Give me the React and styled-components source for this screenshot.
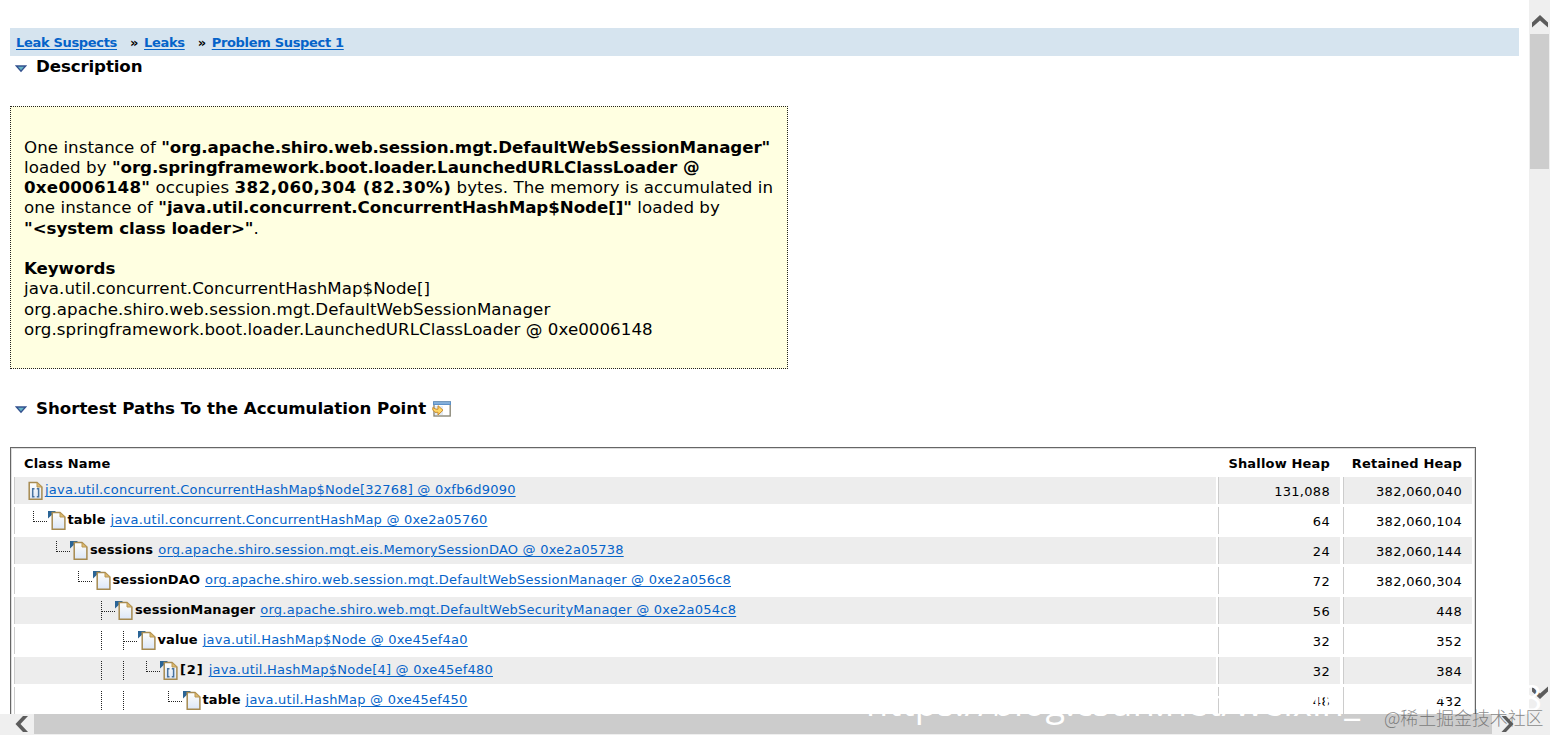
import React from 'react';
import styled, { createGlobalStyle } from 'styled-components';

const GlobalStyle = createGlobalStyle`
    html, body {
        margin : 0;
        background : #fff;
        overflow : hidden;
    }
    * {
        box-sizing : border-box;
    }
`;

const rows = [
    {tree: [], array: true, first: true, link: 'java.util.concurrent.ConcurrentHashMap$Node[32768] @ 0xfb6d9090', shallow: '131,088', retained: '382,060,040'},
    {tree: ['end'], name: 'table', link: 'java.util.concurrent.ConcurrentHashMap @ 0xe2a05760', shallow: '64', retained: '382,060,104'},
    {tree: ['', 'end'], name: 'sessions', link: 'org.apache.shiro.session.mgt.eis.MemorySessionDAO @ 0xe2a05738', shallow: '24', retained: '382,060,144'},
    {tree: ['', '', 'end'], name: 'sessionDAO', link: 'org.apache.shiro.web.session.mgt.DefaultWebSessionManager @ 0xe2a056c8', shallow: '72', retained: '382,060,304'},
    {tree: ['', '', '', 'fork'], name: 'sessionManager', link: 'org.apache.shiro.web.mgt.DefaultWebSecurityManager @ 0xe2a054c8', shallow: '56', retained: '448'},
    {tree: ['', '', '', 'line', 'fork'], name: 'value', link: 'java.util.HashMap$Node @ 0xe45ef4a0', shallow: '32', retained: '352'},
    {tree: ['', '', '', 'line', 'line', 'end'], name: '[2]', array: true, link: 'java.util.HashMap$Node[4] @ 0xe45ef480', shallow: '32', retained: '384'},
    {tree: ['', '', '', 'line', 'line', '', 'end'], name: 'table', link: 'java.util.HashMap @ 0xe45ef450', shallow: '48', retained: '432'},
];

const Branch = ({type}) => (
    <BranchSvg viewBox="0 0 22.5 20">
        {type === 'end' && <path d="M7.5 1V12M8 11.5H22" />}
        {type === 'fork' && <path d="M7.5 1V20M8 11.5H22" />}
        {type === 'line' && <path d="M7.5 1V20" />}
    </BranchSvg>
);

const ObjectIcon = ({array, first}) => (
    <IconSvg viewBox="0 0 19 20">
        <defs>
            <linearGradient id="paper" x1="0" y1="0" x2="0" y2="1">
                <stop offset="0" stopColor="#fffefa" />
                <stop offset="1" stopColor="#dce7f8" />
            </linearGradient>
        </defs>
        {!first && <path d="M0 0H8L0 7.5Z" fill="#2a6496" />}
        <path d="M4.2 1.5H12L16.9 6V18.2H4.2Z" fill="url(#paper)" stroke="#a68a50" strokeWidth="1.5" />
        <path d="M12 1.5V6H16.9Z" fill="#e0bd70" stroke="#b89653" />
        {array && <path d="M9.5 7.7H7.7V15.8H9.5M11.8 7.7H13.6V15.8H11.8" fill="none" stroke="#47729f" strokeWidth="1.5" />}
    </IconSvg>
);

const Toggle = () => (
    <ToggleSvg viewBox="0 0 12 8">
        <path d="M1.3 1H10.7L6 6.2Z" fill="#65b5c5" stroke="#34518f" strokeWidth="1.4" />
    </ToggleSvg>
);

const OpenIcon = () => (
    <OpenSvg viewBox="0 0 19 16">
        <rect x="2" y="1" width="16.2" height="14" fill="#fff" stroke="#8b8979" strokeWidth="1.4" />
        <path d="M1 .3H19V4H1Z" fill="#5d91c8" />
        <path d="M2 2H18" stroke="#a8caea" />
        <path d="M3 5H11V14H3Z" fill="#e2ebf5" />
        <path d="M.8 6.5L4 8.2H6V4.7L11 9.2L6 14V11.3H3L.8 9Z" fill="#ffd765" stroke="#c98b2c" />
    </OpenSvg>
);

function App() {
    return (
        <Screen>
            <GlobalStyle />
            <Upper>
                <Content>
                    <Crumbs>
                        <a>Leak Suspects</a><span>»</span>
                        <a>Leaks</a><span>»</span>
                        <a>Problem Suspect 1</a>
                    </Crumbs>
                    <Heading><Toggle /><h2>Description</h2></Heading>
                    <Description>
                        <p>One instance of <b>"org.apache.shiro.web.session.mgt.DefaultWebSessionManager"</b></p>
                        <p>loaded by <b>"org.springframework.boot.loader.LaunchedURLClassLoader @</b></p>
                        <p><Figure>0xe0006148"</Figure> occupies <Figure $wide>382,060,304 (82.30%)</Figure> bytes. The memory is accumulated in</p>
                        <p>one instance of <b>"java.util.concurrent.ConcurrentHashMap$Node[]"</b> loaded by</p>
                        <p><b>"&lt;system class loader&gt;"</b>.</p>
                        <br />
                        <p><b>Keywords</b></p>
                        <p>java.util.concurrent.ConcurrentHashMap$Node[]</p>
                        <p>org.apache.shiro.web.session.mgt.DefaultWebSessionManager</p>
                        <p>org.springframework.boot.loader.LaunchedURLClassLoader @ 0xe0006148</p>
                    </Description>
                    <Heading $second><Toggle /><h2>Shortest Paths To the Accumulation Point</h2><OpenIcon /></Heading>
                    <Table>
                        <HeaderRow>
                            <span>Class Name</span><span>Shallow Heap</span><span>Retained Heap</span>
                        </HeaderRow>
                        {rows.map((row, i) => (
                            <Row key={row.link} $odd={i % 2 === 0}>
                                <ClassCell $array={row.array}>
                                    {row.tree.map((type, n) => <Branch key={n} type={type} />)}
                                    <ObjectIcon array={row.array} first={row.first} />
                                    {row.name && <b>{row.name}</b>}
                                    <a>{row.link}</a>
                                </ClassCell>
                                <NumberCell>{row.shallow}</NumberCell>
                                <NumberCell $last>{row.retained}</NumberCell>
                            </Row>
                        ))}
                    </Table>
                </Content>
                <VerticalBar>
                    <Arrow viewBox="0 0 20 20"><path d="M10 3L18 10.5V15.5L10 8.5L2 15.5V10.5Z" /></Arrow>
                    <VerticalThumb />
                    <Arrow viewBox="0 0 20 20"><path d="M10 15L18 7.5V2.5L10 9.5L2 2.5V7.5Z" /></Arrow>
                </VerticalBar>
            </Upper>
            <HorizontalBar>
                <Arrow viewBox="0 0 20 20"><path d="M3.5 10L11 18H16L8.5 10L16 2H11Z" /></Arrow>
                <HorizontalThumb />
                <Arrow viewBox="0 0 20 20"><path d="M15.5 10L8 18H3.5L11 10L3.5 2H8Z" /></Arrow>
            </HorizontalBar>
            <BlogMark>https://blog.csdn.net/weixin_<span>43831578</span></BlogMark>
            <CommunityMark>@稀土掘金技术社区</CommunityMark>
        </Screen>
    );
}

export default App;

const Screen = styled.div`
    position : relative;
    width : 1550px;
    height : 735px;
    overflow : hidden;
    color : #000;
    font-family : "DejaVu Sans", sans-serif;
    a {
        color : #0563c9;
        text-decoration : underline;
        text-underline-offset : 2px;
        text-decoration-thickness : 1px;
    }
`;

const Upper = styled.div`
    display : flex;
    height : 714px;
`;

const Content = styled.main`
    width : 1529px;
    padding : 28px 10px 0;
    overflow : hidden;
`;

const Crumbs = styled.nav`
    display : flex;
    height : 28px;
    padding-left : 6px;
    background : #d6e4ef;
    font-size : 13px;
    font-weight : bold;
    line-height : 29px;
    letter-spacing : -.32px;
    white-space : pre;
    span {
        width : 27px;
        padding-left : 13px;
    }
`;

const Heading = styled.div`
    display : flex;
    height : 22px;
    margin-top : ${props => props.$second ? '28px' : '0'};
    padding-left : 5px;
    align-items : center;
    h2 {
        margin : ${props => props.$second ? '1px' : '0'} 6px 0 9px;
        font-size : 16.67px;
        line-height : 20px;
        letter-spacing : ${props => props.$second ? '-.02px' : '-.12px'};
        white-space : nowrap;
    }
`;

const ToggleSvg = styled.svg`
    width : 12px;
    height : 8px;
    margin-top : 3px;
`;

const OpenSvg = styled.svg`
    width : 19px;
    height : 16px;
    margin-top : 2px;
`;

const Description = styled.section`
    width : 778px;
    height : 263px;
    margin-top : 28px;
    padding : 30.6px 13px 0;
    border : 1px dotted #222;
    background : #ffffe1;
    font-size : 16.67px;
    line-height : 20.25px;
    letter-spacing : .05px;
    white-space : nowrap;
    p {
        margin : 0;
    }
    b {
        letter-spacing : -.05px;
    }
`;

const Figure = styled.strong`
    letter-spacing : ${props => props.$wide ? '.47px' : '.25px'};
`;

const Table = styled.section`
    width : 1466px;
    margin-top : 28px;
    padding : 2px 2px 0 3px;
    border : 1px solid #666;
    box-shadow : inset 0 0 0 1px #ddd;
    font-size : 13px;
    letter-spacing : .23px;
`;

const HeaderRow = styled.div`
    display : grid;
    height : 27px;
    grid-template-columns : 1202px 124px 132px;
    font-weight : bold;
    line-height : 27px;
    letter-spacing : .17px;
    span {
        padding : 0 10px;
        text-align : right;
        &:first-child {
            text-align : left;
        }
    }
`;

const Row = styled.div`
    display : grid;
    height : 27px;
    margin-bottom : 3px;
    grid-template-columns : 1202px 122px 130px;
    grid-template-rows : 27px;
    column-gap : 2px;
    > div {
        background : ${props => props.$odd ? '#ededed' : '#fff'};
        border-left : 1px solid #ccc;
    }
`;

const ClassCell = styled.div`
    display : flex;
    padding-left : 11px;
    line-height : 25px;
    white-space : nowrap;
    b {
        margin-right : 5px;
        letter-spacing : ${props => props.$array ? '.9px' : '.1px'};
    }
`;

const NumberCell = styled.div`
    margin-left : ${props => props.$last ? '1px' : '0'};
    padding-right : 10px;
    text-align : right;
    line-height : 29px;
    letter-spacing : .3px;
`;

const BranchSvg = styled.svg`
    width : 22.5px;
    height : 20px;
    margin-top : 3px;
    flex : none;
    fill : none;
    stroke : #222;
    stroke-dasharray : 1 1;
    shape-rendering : crispEdges;
`;

const IconSvg = styled.svg`
    width : 19px;
    height : 20px;
    margin : 4px .7px 0 -.7px;
    flex : none;
`;

const VerticalBar = styled.aside`
    display : flex;
    width : 21px;
    padding : 12px 0 10px;
    flex-direction : column;
    align-items : center;
    background : #efefef;
`;

const Arrow = styled.svg`
    width : 20px;
    height : 20px;
    flex : none;
    fill : #5c5c5c;
`;

const VerticalThumb = styled.div`
    width : 19px;
    height : 135px;
    margin : 2px 0 auto;
    background : #cdcdcd;
`;

const HorizontalBar = styled.footer`
    display : flex;
    height : 21px;
    padding-left : 12px;
    background : #efefef;
`;

const HorizontalThumb = styled.div`
    width : 1458px;
    height : 20px;
    margin : 0 6px 0 2px;
    background : #ccc;
`;

const BlogMark = styled.div`
    position : absolute;
    top : 678px;
    left : 866px;
    color : #fff;
    font-family : "Open Sans", sans-serif;
    font-size : 36px;
    line-height : 49px;
    letter-spacing : .36px;
    white-space : nowrap;
    span {
        line-height : 1;
        letter-spacing : 2.4px;
        vertical-align : 5px;
    }
`;

const CommunityMark = styled.div`
    position : absolute;
    top : 704px;
    left : 1384px;
    color : rgba(90, 90, 90, .7);
    font-family : "Noto Sans CJK SC", sans-serif;
    font-size : 18px;
    font-weight : 300;
    line-height : 26px;
    letter-spacing : -.1px;
    white-space : nowrap;
`;
